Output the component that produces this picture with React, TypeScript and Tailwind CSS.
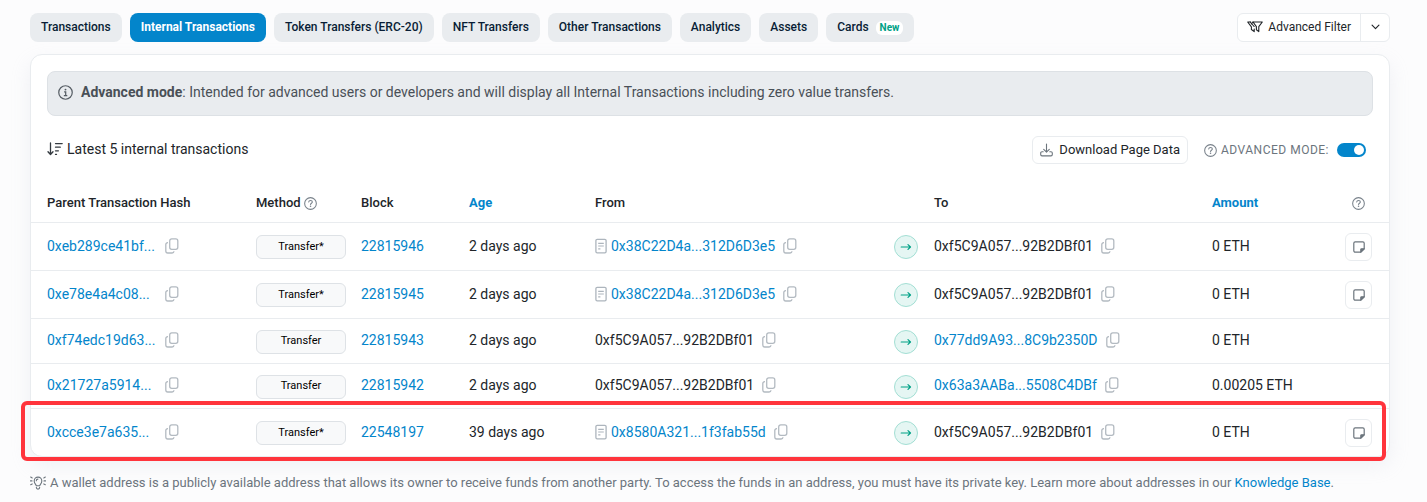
import React from "react";

type Address = { text: string; link?: boolean; contract?: boolean };
type Row = {
  hash: string;
  method: string;
  block: string;
  age: string;
  from: Address;
  to: Address;
  amount: string;
  note?: boolean;
};

const OWNER = "0xf5C9A057...92B2DBf01";

const rows: Row[] = [
  {
    hash: "0xeb289ce41bf...",
    method: "Transfer*",
    block: "22815946",
    age: "2 days ago",
    from: { text: "0x38C22D4a...312D6D3e5", link: true, contract: true },
    to: { text: OWNER },
    amount: "0 ETH",
    note: true,
  },
  {
    hash: "0xe78e4a4c08...",
    method: "Transfer*",
    block: "22815945",
    age: "2 days ago",
    from: { text: "0x38C22D4a...312D6D3e5", link: true, contract: true },
    to: { text: OWNER },
    amount: "0 ETH",
    note: true,
  },
  {
    hash: "0xf74edc19d63...",
    method: "Transfer",
    block: "22815943",
    age: "2 days ago",
    from: { text: OWNER },
    to: { text: "0x77dd9A93...8C9b2350D", link: true },
    amount: "0 ETH",
  },
  {
    hash: "0x21727a5914...",
    method: "Transfer",
    block: "22815942",
    age: "2 days ago",
    from: { text: OWNER },
    to: { text: "0x63a3AABa...5508C4DBf", link: true },
    amount: "0.00205 ETH",
  },
  {
    hash: "0xcce3e7a635...",
    method: "Transfer*",
    block: "22548197",
    age: "39 days ago",
    from: { text: "0x8580A321...1f3fab55d", link: true, contract: true },
    to: { text: OWNER },
    amount: "0 ETH",
    note: true,
  },
];

const tabs = [
  "Transactions",
  "Internal Transactions",
  "Token Transfers (ERC-20)",
  "NFT Transfers",
  "Other Transactions",
  "Analytics",
  "Assets",
  "Cards",
];

function CopyIcon() {
  return (
    <svg width="14" height="16" viewBox="0 0 14 16" fill="none" stroke="#b3bac1" strokeWidth="1.300" aria-hidden="true">
      <rect x="4.700" y="0.900" width="8.100" height="10.400" rx="2" />
      <path d="M3 4.700h-.3a1.900 1.900 0 0 0-1.900 1.900v6.500A1.900 1.900 0 0 0 2.700 15h4.400a1.900 1.900 0 0 0 1.900-1.700" />
    </svg>
  );
}

function ContractIcon() {
  return (
    <svg width="12" height="16" viewBox="0 0 12 16" fill="none" stroke="#adb5bd" strokeWidth="1.300" aria-hidden="true">
      <rect x="0.900" y="1.300" width="10.200" height="13.600" rx="1.300" />
      <path d="M3.200 5.300h5.600M3.200 8h5.600M3.200 10.900h2.200" strokeWidth="1.200" />
    </svg>
  );
}

function HelpIcon() {
  return (
    <svg width="13" height="13" viewBox="0 0 16 16" fill="none" stroke="#78818a" strokeWidth="1.300" aria-hidden="true">
      <circle cx="8" cy="8" r="7.200" />
      <path d="M5.800 6.100c.1-1.100.9-1.700 2.200-1.700s2.300.7 2.300 1.800c0 1.400-2.200 1.500-2.200 2.900" strokeLinecap="round" />
      <circle cx="8.050" cy="11.400" r="0.950" fill="#78818a" stroke="none" />
    </svg>
  );
}

function InfoIcon() {
  return (
    <svg width="15" height="15" viewBox="0 0 16 16" fill="none" stroke="#565d64" strokeWidth="1.300" aria-hidden="true">
      <circle cx="8" cy="8" r="7.200" />
      <path d="M6.500 7.400h1.700v3.800M6.200 11.300h3.700" />
      <circle cx="8" cy="4.900" r="1" fill="#565d64" stroke="none" />
    </svg>
  );
}

function SortIcon() {
  return (
    <svg width="16" height="14" viewBox="0 0 16 14" fill="none" stroke="#343a40" strokeWidth="1.300" strokeLinecap="round" strokeLinejoin="round" aria-hidden="true">
      <path d="M3.500 1v11.300M1 9.700l2.500 2.800L6 9.700M8.500 1.600h6.700M8.500 5.200h4.800M8.500 8.800h2.900M8.500 12.400h1" />
    </svg>
  );
}

function FilterIcon() {
  return (
    <svg width="16" height="12" viewBox="0 0 16 12" fill="none" stroke="#212529" strokeWidth="1.100" strokeLinejoin="round" strokeLinecap="round" aria-hidden="true">
      <path d="M6 1h9.300l-3.500 4.600v5L9.400 8.800V5.600z" />
      <path d="M6 1L4.400 2.800M3.700 1H.7l3.700 4.800v2.700l2.800 2.100V8" />
      <path d="M3.200 1l3.900 4.500" />
    </svg>
  );
}

function DownloadIcon() {
  return (
    <svg width="13" height="14" viewBox="0 0 13 14" fill="none" stroke="#6c757d" strokeWidth="1.100" strokeLinecap="round" strokeLinejoin="round" aria-hidden="true">
      <path d="M6.500 1v8M3.700 6.400l2.800 2.800 2.800-2.800" />
      <path d="M3.200 8.700H2A1.300 1.300 0 0 0 .7 10v1.600A1.300 1.300 0 0 0 2 12.900h9a1.300 1.300 0 0 0 1.300-1.300V10A1.300 1.300 0 0 0 11 8.700H9.800" />
    </svg>
  );
}

function ArrowIcon() {
  return (
    <svg width="12" height="10" viewBox="0 0 12 10" fill="none" stroke="#00a186" strokeWidth="1.200" strokeLinecap="round" strokeLinejoin="round" aria-hidden="true">
      <path d="M1.200 5h9.300M8 2.600L10.500 5 8 7.400" />
    </svg>
  );
}

function NoteIcon() {
  return (
    <svg width="12" height="12" viewBox="0 0 12 12" fill="none" stroke="#6c757d" strokeWidth="1.200" strokeLinejoin="round" aria-hidden="true">
      <path d="M2.200.8h7.600a1.400 1.400 0 0 1 1.400 1.400v5.600l-3.400 3.400H2.200A1.400 1.400 0 0 1 .8 9.800V2.200A1.400 1.400 0 0 1 2.200.8z" />
      <path d="M11.200 7.800H8.600a.8.8 0 0 0-.8.8v2.600z" fill="#6c757d" />
    </svg>
  );
}

function BulbIcon() {
  return (
    <svg width="16" height="14" viewBox="0 0 16 14" fill="none" stroke="#6c757d" strokeWidth="1.100" strokeLinecap="round" strokeLinejoin="round" aria-hidden="true">
      <path d="M6.200 9.700C6 8.300 4.200 7.400 4.200 4.900a3.800 3.800 0 0 1 7.600 0c0 2.500-1.800 3.400-2 4.800zM6.300 11.300c0 1.100.7 1.800 1.700 1.800s1.700-.7 1.700-1.800" />
      <path d="M.7 1.100l1.500.8M.5 4.900h1.500M.7 8.700l1.500-.8M15.300 1.100l-1.500.8M15.500 4.900H14M15.300 8.700l-1.500-.8M6.300 4.700c0-.9.7-1.600 1.600-1.600" />
    </svg>
  );
}

function CopyButton({ label }: { label: string }) {
  return (
    <button type="button" aria-label={label} className="shrink-0">
      <CopyIcon />
    </button>
  );
}

function AddressCell({ address }: { address: Address }) {
  return (
    <div className="flex items-center gap-2">
      <span className="flex items-center gap-1">
        {address.contract && <ContractIcon />}
        {address.link ? (
          <a href="#address" className="text-[#0385cb]">
            {address.text}
          </a>
        ) : (
          <span>{address.text}</span>
        )}
      </span>
      <CopyButton label="Copy address" />
    </div>
  );
}

const textCell = "border-t border-[#e9ecef] px-2 pt-2 pb-[10px] align-middle";
const boxCell = "border-t border-[#e9ecef] px-2 pt-[10px] pb-[9px] align-middle";
const head = "px-2 text-left align-middle font-medium";

export default function App() {
  return (
    <div className="min-h-screen bg-[#fcfcfd] pt-[13px] pr-[37px] pb-2 pl-[30px] font-['Roboto',sans-serif] text-[14px] leading-5 text-[#212529]">
      <div className="flex items-start justify-between">
        <nav className="flex gap-2 text-[12px] font-medium text-[#081d35]">
          {tabs.map((tab) => (
            <a
              key={tab}
              href="#tab"
              className={
                tab === "Internal Transactions"
                  ? "flex h-[29px] items-center rounded-lg bg-[#0385cb] px-[11px] pb-[2px] font-bold whitespace-nowrap text-white"
                  : "flex h-[29px] items-center rounded-lg bg-[#e9ecef] px-[11px] pb-[2px] whitespace-nowrap"
              }
            >
              {tab}
              {tab === "Cards" && (
                <span className="mt-[2px] ml-[7px] rounded-md bg-white px-1 text-[10px] leading-[14px] font-bold text-[#00a186]">
                  New
                </span>
              )}
            </a>
          ))}
        </nav>
        <div className="flex h-[29px] rounded-md border border-[#e9ecef] bg-white text-[12px]">
          <button type="button" className="flex items-center gap-[5px] border-r border-[#e9ecef] px-[9px] pb-[2px]">
            <FilterIcon />
            Advanced Filter
          </button>
          <button type="button" aria-label="More filters" className="flex w-7 items-center justify-center pb-[2px]">
            <svg width="9" height="6" viewBox="0 0 10 6" fill="none" stroke="#212529" strokeWidth="1.300" strokeLinecap="round" strokeLinejoin="round" aria-hidden="true">
              <path d="M1.200 1L5 4.800 8.800 1" />
            </svg>
          </button>
        </div>
      </div>

      <main className="relative mt-3">
        <section className="rounded-xl border border-[#e9ecef] bg-white shadow-[0_8px_19px_rgba(189,197,209,0.2)]">
          <div className="px-4 pt-4">
            <div className="flex h-[45px] items-center gap-2 rounded-lg border border-[#dde1e5] bg-[#e9ecef] px-[10px] pb-[3px] text-[#495057]">
              <InfoIcon />
              <p>
                <strong className="font-bold">Advanced mode</strong>: Intended for advanced users or developers and will
                display all Internal Transactions including zero value transfers.
              </p>
            </div>
          </div>

          <div className="flex items-center justify-between pt-5 pr-[23px] pb-5 pl-4">
            <h2 className="flex items-center gap-1 pb-[2px]">
              <SortIcon />
              Latest 5 internal transactions
            </h2>
            <div className="flex items-center gap-4">
              <button
                type="button"
                className="flex h-7 items-center gap-[6px] rounded-md border border-[#e9ecef] px-[7px] text-[13px]"
              >
                <DownloadIcon />
                Download Page Data
              </button>
              <label className="flex items-center text-[12px] text-[#6c757d]">
                <HelpIcon />
                <span className="mr-2 ml-1 tracking-[0.5px]">ADVANCED MODE:</span>
                <input
                  type="checkbox"
                  role="switch"
                  defaultChecked
                  className="h-[14px] w-[29px] appearance-none rounded-full bg-[#ced4da] before:mt-[2px] before:ml-[3px] before:block before:size-[10px] before:rounded-full before:bg-white checked:bg-[#0385cb] checked:before:ml-[17px]"
                />
              </label>
            </div>
          </div>

          <table className="w-full table-fixed border-separate border-spacing-0 whitespace-nowrap">
            <colgroup>
              <col className="w-[217px]" />
              <col className="w-[105px]" />
              <col className="w-[108px]" />
              <col className="w-[126px]" />
              <col className="w-[299px]" />
              <col className="w-[40px]" />
              <col className="w-[278px]" />
              <col className="w-[133px]" />
              <col className="w-[52px]" />
            </colgroup>
            <thead className="text-[13px]">
              <tr className="h-[38px]">
                <th className="pr-2 pl-4 text-left align-middle font-medium">Parent Transaction Hash</th>
                <th className={head}>
                  <span className="flex items-center gap-[3px]">
                    Method <HelpIcon />
                  </span>
                </th>
                <th className={head}>Block</th>
                <th className={head}>
                  <a href="#age" className="font-bold text-[#0385cb]">
                    Age
                  </a>
                </th>
                <th className={head}>From</th>
                <th className={head} aria-label="Direction" />
                <th className={head}>To</th>
                <th className={head}>
                  <a href="#amount" className="font-bold text-[#0385cb]">
                    Amount
                  </a>
                </th>
                <th className={head} aria-label="Notes">
                  <span className="flex w-[27px] justify-center">
                    <HelpIcon />
                  </span>
                </th>
              </tr>
            </thead>
            <tbody>
              {rows.map((row) => (
                <tr key={row.hash} className="h-[45px]">
                  <td className="border-t border-[#e9ecef] pt-2 pr-2 pb-[10px] pl-4 align-middle">
                    <div className="flex items-center gap-2">
                      <a href="#tx" className="w-[110px] text-[#0385cb]">
                        {row.hash}
                      </a>
                      <CopyButton label="Copy transaction hash" />
                    </div>
                  </td>
                  <td className={boxCell}>
                    <span className="flex h-6 w-[90px] items-center justify-center rounded-md border border-[#dee2e6] bg-[#f8f9fa] pb-px text-[11px] text-black">
                      {row.method}
                    </span>
                  </td>
                  <td className={textCell}>
                    <a href="#block" className="text-[#0385cb]">
                      {row.block}
                    </a>
                  </td>
                  <td className={textCell}>{row.age}</td>
                  <td className={textCell}>
                    <AddressCell address={row.from} />
                  </td>
                  <td className={boxCell}>
                    <span className="flex size-6 items-center justify-center rounded-full border border-[#a3dfd4] bg-[#e5f6f3]">
                      <ArrowIcon />
                    </span>
                  </td>
                  <td className={textCell}>
                    <AddressCell address={row.to} />
                  </td>
                  <td className={textCell}>{row.amount}</td>
                  <td className={boxCell}>
                    {row.note && (
                      <button
                        type="button"
                        aria-label="Add note"
                        className="flex h-7 w-[27px] items-center justify-center rounded-md border border-[#e9ecef]"
                      >
                        <NoteIcon />
                      </button>
                    )}
                  </td>
                </tr>
              ))}
            </tbody>
          </table>
        </section>
        <div className="pointer-events-none absolute right-1 -bottom-1 -left-[9px] h-[60px] rounded-md border-4 border-[#ff343c]" />
      </main>

      <footer className="mt-4 flex items-center gap-1 text-[13px] text-[#6c757d]">
        <BulbIcon />
        <p>
          A wallet address is a publicly available address that allows its owner to receive funds from another party. To
          access the funds in an address, you must have its private key. Learn more about addresses in our{" "}
          <a href="#knowledge-base" className="text-[#0385cb]">
            Knowledge Base
          </a>
          .
        </p>
      </footer>
    </div>
  );
}
